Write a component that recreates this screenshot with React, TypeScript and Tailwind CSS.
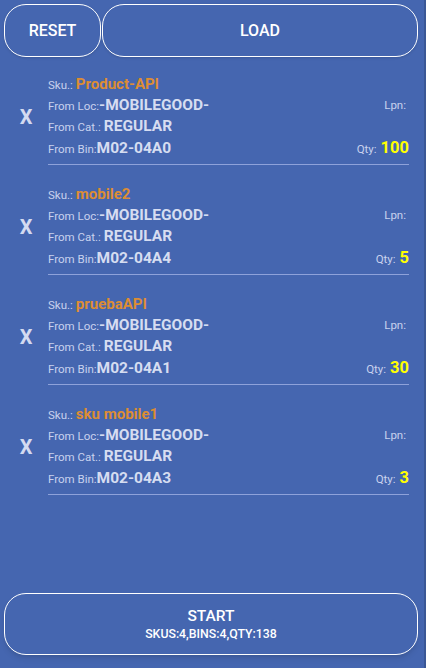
import React from 'react';

const items = [
  { sku: 'Product-API', loc: '-MOBILEGOOD-', cat: 'REGULAR', bin: 'M02-04A0', qty: 100 },
  { sku: 'mobile2', loc: '-MOBILEGOOD-', cat: 'REGULAR', bin: 'M02-04A4', qty: 5 },
  { sku: 'pruebaAPI', loc: '-MOBILEGOOD-', cat: 'REGULAR', bin: 'M02-04A1', qty: 30 },
  { sku: 'sku mobile1', loc: '-MOBILEGOOD-', cat: 'REGULAR', bin: 'M02-04A3', qty: 3 },
];

function Row(props) {
  return (
    <div className="flex items-center justify-between h-[21.5px]">
      <div className="flex items-baseline">
        <span className="text-[11.5px] text-[#c9d2ee]">{props.label}</span>
        <span className={props.valueClass}>{props.value}</span>
      </div>
      {props.right}
    </div>
  );
}

function PickItem(props) {
  const it = props.item;
  return (
    <div className="flex">
      <div className="w-[44px] flex items-center justify-center pb-[5px]">
        <span className="text-[20px] font-bold text-[#d3daf0]">X</span>
      </div>
      <div className="flex-1 mr-[9px] border-b border-[#8ea2da] pb-[5px]">
        <Row label="Sku.:" value={it.sku} valueClass="ml-[3px] text-[15px] font-bold text-[#dd8d33]" />
        <Row
          label="From Loc:"
          value={it.loc}
          valueClass="text-[15.5px] font-bold text-[#d6ddf1]"
          right={<span className="text-[11.5px] text-[#c9d2ee] mr-[3px]">Lpn:</span>}
        />
        <Row label="From Cat.:" value={it.cat} valueClass="ml-[3px] text-[15.5px] font-bold text-[#d6ddf1]" />
        <Row
          label="From Bin:"
          value={it.bin}
          valueClass="text-[15.5px] font-bold text-[#d6ddf1]"
          right={
            <div className="flex items-baseline">
              <span className="text-[11.5px] text-[#c9d2ee]">Qty:</span>
              <span className="ml-[4px] text-[16.5px] font-bold text-[#ffff00]">{it.qty}</span>
            </div>
          }
        />
      </div>
    </div>
  );
}

export default function App() {
  return (
    <div className="flex h-screen w-full bg-[#4566b0]" style={{ fontFamily: 'Roboto, "Noto Sans", sans-serif' }}>
      <div className="flex-1 flex flex-col pl-1 pr-[6px] pt-1 pb-[13px]">
        <div className="flex gap-[1px]">
          <button className="w-[97px] h-[53px] rounded-[22px] border-[1.5px] border-white text-white text-[16px] font-medium shadow-sm">
            RESET
          </button>
          <button className="flex-1 h-[53px] rounded-[22px] border-[1.5px] border-white text-white text-[16px] font-medium shadow-sm">
            LOAD
          </button>
        </div>
        <div className="flex-1 flex flex-col gap-[18px] mt-[16px]">
          {items.map((it, i) => (
            <PickItem key={i} item={it} />
          ))}
        </div>
        <button className="h-[62px] rounded-[22px] border-[1.5px] border-white text-white shadow-md flex flex-col items-center justify-center">
          <span className="text-[15.5px] font-medium leading-[20px]">START</span>
          <span className="text-[12.3px] font-medium leading-[16px]">SKUS:4,BINS:4,QTY:138</span>
        </button>
      </div>
      <div className="w-[2px] bg-[#3a5796]"></div>
    </div>
  );
}
